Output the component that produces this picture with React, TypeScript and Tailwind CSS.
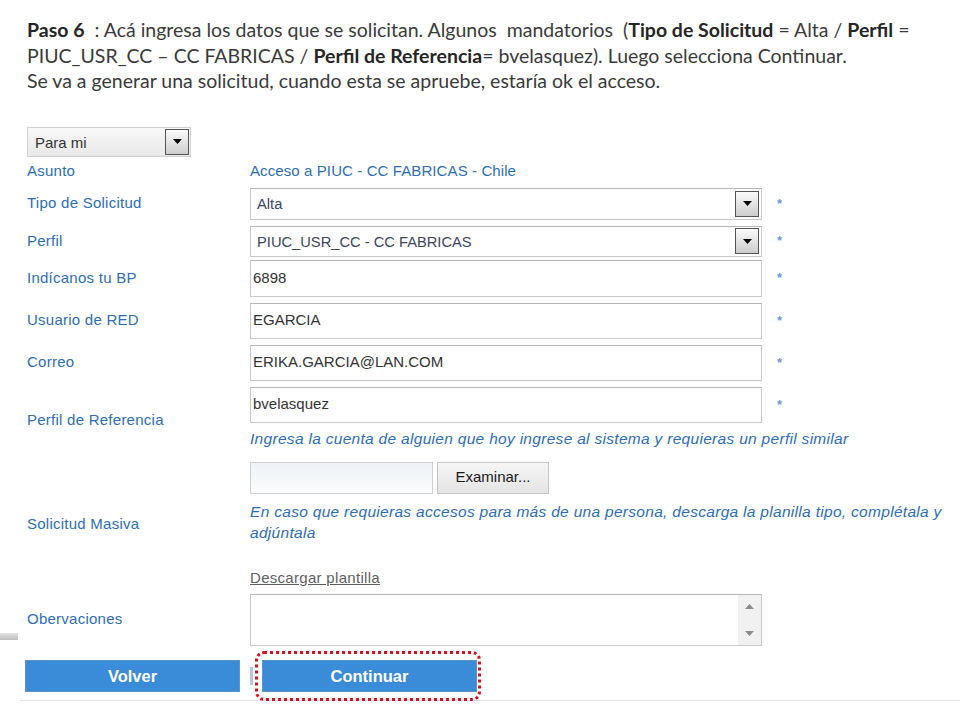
const SelectArrow = () => (
  <span className="flex h-[26px] w-[24px] shrink-0 items-center justify-center border border-[#555] bg-linear-to-b from-[#fbfbfb] to-[#cdcdcd]">
    <svg width="9" height="5" viewBox="0 0 9 5">
      <path d="M0 0h9L4.5 5z" fill="#000" />
    </svg>
  </span>
);

const Star = () => (
  <span className="ml-[15px] text-[13px] font-bold text-[#6b9bd0]">*</span>
);

const Label = ({ children }: { children: React.ReactNode }) => (
  <div className="w-[250px] shrink-0 pl-[27px] text-[15px] tracking-[0.25px] text-[#2f6db3]">{children}</div>
);

const Field = ({ value, h }: { value: string; h: string }) => (
  <div
    className={`flex w-[512px] items-center border border-[#c9c9c9] border-t-[#b5b5b5] bg-white pl-[2px] text-[15px] text-[#333] ${h}`}
  >
    {value}
  </div>
);

const DropField = ({ value }: { value: string }) => (
  <div className="flex h-full w-[512px] items-center justify-between border border-[#c9c9c9] border-t-[#b5b5b5] bg-white pl-[6px] pr-[2px] text-[14.7px] text-[#3b4560]">
    <span className="mt-[2px]">{value}</span>
    <SelectArrow />
  </div>
);

export default function App() {
  return (
    <div className="h-[720px] w-[960px] overflow-hidden bg-white font-['Liberation_Sans',Arial,sans-serif]">
      <div className="whitespace-nowrap pl-[27px] pt-[17px] font-['Lato',sans-serif] text-[19.5px] leading-[25.5px] text-[#3a3a3a]">
        <b className="text-[#262626]">Paso 6</b>&nbsp; : Acá ingresa los datos que se solicitan. Algunos&nbsp; mandatorios&nbsp; (
        <b className="text-[#262626]">Tipo de Solicitud</b> = Alta / <b className="text-[#262626]">Perfil</b> =
        <br />
        PIUC_USR_CC – CC FABRICAS / <b className="text-[#262626]">Perfil de Referencia</b>= bvelasquez). Luego selecciona Continuar.
        <br />
        Se va a generar una solicitud, cuando esta se apruebe, estaría ok el acceso.
      </div>

      <div className="mt-[33px]">
        <div className="ml-[27px] flex h-[30px] w-[164px] items-center justify-between border border-[#d2d2d2] bg-linear-to-b from-[#f8f8f8] to-[#e8e8e8] pl-[7px] pr-[1px] text-[15px] text-[#333]">
          <span className="mt-[3px]">Para mi</span>
          <SelectArrow />
        </div>

        <div className="mt-[5px] flex h-[20px] items-center">
          <Label>Asunto</Label>
          <span className="text-[15px] tracking-[0.1px] text-[#2f6db3]">Acceso a PIUC - CC FABRICAS - Chile</span>
        </div>

        <div className="mt-[6px] flex h-[32px] items-center">
          <Label>Tipo de Solicitud</Label>
          <DropField value="Alta" />
          <Star />
        </div>

        <div className="mt-[6px] flex h-[31px] items-center">
          <Label>Perfil</Label>
          <DropField value="PIUC_USR_CC - CC FABRICAS" />
          <Star />
        </div>

        <div className="mt-[3px] flex items-center">
          <Label>Indícanos tu BP</Label>
          <Field value="6898" h="h-[37px]" />
          <Star />
        </div>

        <div className="mt-[6px] flex items-center">
          <Label>Usuario de RED</Label>
          <Field value="EGARCIA" h="h-[36px]" />
          <Star />
        </div>

        <div className="mt-[6px] flex items-center">
          <Label>Correo</Label>
          <Field value="ERIKA.GARCIA@LAN.COM" h="h-[36px]" />
          <Star />
        </div>

        <div className="mt-[6px] flex items-center">
          <Label>
            <span className="relative top-[3px]">Perfil de Referencia</span>
          </Label>
          <div className="flex flex-col">
            <div className="flex items-center">
              <Field value="bvelasquez" h="h-[36px]" />
              <Star />
            </div>
            <div className="mt-[6px] whitespace-nowrap text-[15.5px] italic leading-[20px] tracking-[0.3px] text-[#2f6db3]">
              Ingresa la cuenta de alguien que hoy ingrese al sistema y requieras un perfil similar
            </div>
          </div>
        </div>

        <div className="mt-[13px] flex items-center">
          <Label>Solicitud Masiva</Label>
          <div className="flex flex-col">
            <div className="flex h-[32px] gap-[4px]">
              <div className="w-[183px] border border-[#cfcfcf] bg-linear-to-b from-[#eef2f6] to-[#fbfcfd]" />
              <div className="flex w-[112px] items-center justify-center border border-[#c4c4c4] bg-linear-to-b from-[#f6f6f6] to-[#e4e4e4] text-[15px] text-[#1a1a1a]">
                Examinar...
              </div>
            </div>
            <div className="mt-[7px] whitespace-nowrap text-[15.5px] italic leading-[21px] tracking-[0.3px] text-[#2f6db3]">
              En caso que requieras accesos para más de una persona, descarga la planilla tipo, complétala y
              <br />
              adjúntala
            </div>
            <div className="mt-[25px] text-[15px] leading-[20px] tracking-[0.3px] text-[#5f5f5f] underline">
              Descargar plantilla
            </div>
          </div>
        </div>

        <div className="mt-[6px] flex h-[52px] items-center">
          <div className="flex w-[250px] shrink-0 items-center">
            <div className="mt-[34px] h-[7px] w-[18px] bg-linear-to-b from-[#e2e2e2] to-[#bdbdbd]" />
            <span className="ml-[9px] text-[15px] tracking-[0.25px] text-[#2f6db3]">Obervaciones</span>
          </div>
          <div className="flex h-full w-[512px] justify-end border border-[#c9c9c9] border-t-[#b5b5b5] bg-white">
            <div className="flex w-[23px] flex-col items-center justify-between bg-[#f1f1f1] py-[9px]">
              <svg width="9" height="5" viewBox="0 0 9 5">
                <path d="M0 5L4.5 0L9 5z" fill="#8a8a8a" />
              </svg>
              <svg width="9" height="5" viewBox="0 0 9 5">
                <path d="M0 0h9L4.5 5z" fill="#8a8a8a" />
              </svg>
            </div>
          </div>
        </div>

        <div className="ml-[20px] mt-[7px] flex h-[48px] items-center border-b border-[#e3e3e3] pl-[5px]">
          <div className="flex h-[32px] w-[215px] items-center justify-center border border-[#5e95c8] bg-[#3a8bd8] text-[16.5px] font-bold text-white">
            Volver
          </div>
          <div className="ml-[10px] h-[18px] w-[3px] bg-[#b9c9d8]" />
          <div className="ml-[2px] h-[50px] rounded-[9px] border-[3px] border-dotted border-[#d3121e] py-[6px] pl-[4px] pr-[1px]">
            <div className="flex h-[32px] w-[215px] items-center justify-center border border-[#5e95c8] bg-[#3a8bd8] text-[16.5px] font-bold text-white">
              Continuar
            </div>
          </div>
        </div>
      </div>
    </div>
  );
}
